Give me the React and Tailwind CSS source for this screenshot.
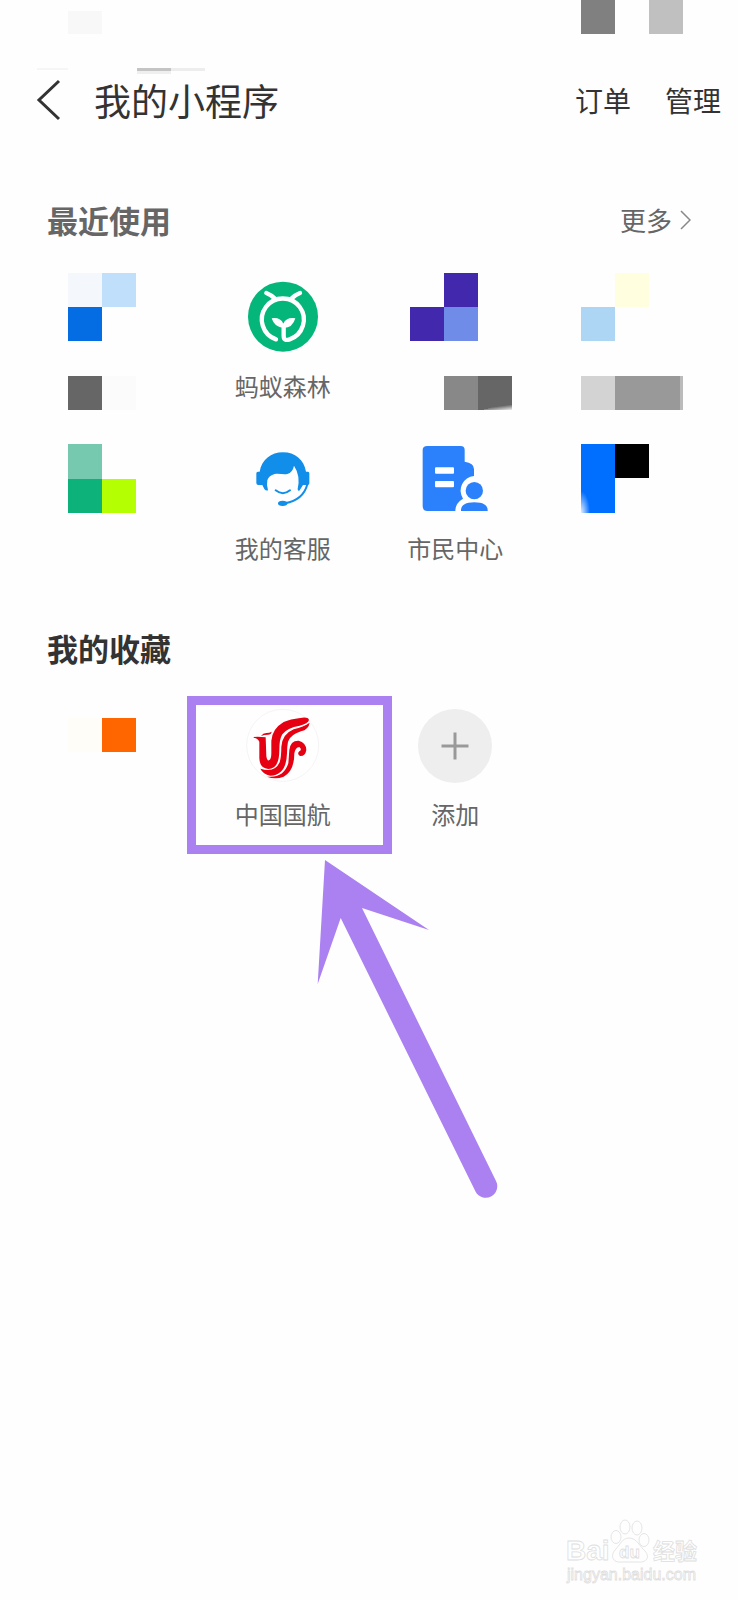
function Mosaic({ tiles, className, width = 102, height = 137, children }) {
  return (
    <svg width={width} height={height} viewBox={`0 0 ${width} ${height}`} className={className} shapeRendering="crispEdges" aria-hidden="true">
      {tiles.map(([x, y, w, h, fill]) => (
        <rect key={`${x}-${y}`} x={x} y={y} width={w} height={h} fill={fill} />
      ))}
      {children}
    </svg>
  );
}

function ForestIcon() {
  return (
    <svg viewBox="0 0 216 216" className="size-[72px]" aria-hidden="true">
      <circle cx="108" cy="107" r="105" fill="#04b67a" />
      <g fill="none" stroke="#fff" strokeWidth="13" strokeLinecap="round">
        <path d="M87 175A63 63 0 1 1 128 175C117 179 110 177 110 164V134" />
        <path d="M58 36Q74 42 86 55M159 36Q143 42 131 55" />
      </g>
      <path d="M74 112Q100 108 109 128Q118 108 145 112Q137 141 110 141Q82 139 74 112Z" fill="#fff" />
    </svg>
  );
}

function ServiceIcon() {
  return (
    <svg viewBox="0 0 216 216" className="size-[72px]" aria-hidden="true">
      <path
        d="M38 86C44 50 72 28 108 28S171 50 177 86H183Q187 87 187 91V121Q187 126 182 126H168L157 143Q152 145 152 138Q161 98 141 68Q137 88 121 93C108 96 97 90 83 93Q66 97 61 112Q58 128 63 142Q57 144 52 138L46 126H34Q28 126 28 120V91Q28 86 33 86Z"
        fill="#118dea"
      />
      <path d="M86 142Q108 159 129 142" fill="none" stroke="#118dea" strokeWidth="6" strokeLinecap="round" />
      <path d="M181 124Q169 171 114 181" fill="none" stroke="#118dea" strokeWidth="6" />
      <ellipse cx="107" cy="181" rx="14" ry="8" fill="#118dea" />
    </svg>
  );
}

function CitizenIcon() {
  return (
    <svg viewBox="0 0 216 216" className="size-[72px]" fill="#2b81fb" aria-hidden="true">
      <path d="M25 9H125Q137 9 137 21V56Q165 60 165 78V99A44 44 0 0 0 132 167Q109 180 109 204H25Q11 204 11 190V21Q11 9 25 9Z" />
      <circle cx="166" cy="143" r="26" />
      <path d="M126 204Q125 178 166 178T206 204Z" />
      <rect x="48" y="73" width="57" height="19" rx="3" fill="#fff" />
      <rect x="48" y="114" width="57" height="19" rx="3" fill="#fff" />
    </svg>
  );
}

function AirlineIcon() {
  return (
    <svg viewBox="0 0 216 216" className="size-[72px] overflow-visible" aria-hidden="true">
      <circle cx="107" cy="109" r="108" fill="#fff" stroke="#eee" strokeWidth="2" />
      <g transform="translate(-20 -27)" fill="#e50012">
        <path d="M40 111L52 110L76 112L78 168Q80 183 86 181Q93 178 93 160V122Q96 86 130 66Q150 57 180 54Q203 50 206 60Q203 71 178 77Q140 83 126 103Q117 117 117 150Q117 207 84 207Q58 205 57 175V125Q52 114 40 113Z" />
        <path d="M62 108Q68 99 78 99T94 95Q93 104 83 104Q72 104 62 108Z" />
        <path d="M60 206Q103 220 118 187Q123 170 123 140Q126 102 160 88Q190 80 208 68Q205 88 182 94Q150 104 143 125Q140 140 140 160Q138 226 90 227Q68 222 60 206Z" />
        <path d="M80 230Q130 235 144 190L147 150Q150 121 175 122Q197 127 198 150Q195 169 179 168Q169 161 177 154Q186 149 177 141Q165 142 162 160Q162 213 130 230Q105 240 80 230Z" />
      </g>
    </svg>
  );
}

function AddIcon() {
  return (
    <svg viewBox="0 0 72 72" className="size-[72px] overflow-visible" aria-hidden="true">
      <circle cx="36" cy="37" r="37" fill="#eee" />
      <path d="M36 23.500V50.500M22.500 37H49.500" stroke="#999" strokeWidth="3" />
    </svg>
  );
}

function MiniApp({ icon, label }) {
  return (
    <button type="button" className="flex w-full flex-col items-center gap-[18px] pt-2">
      {icon}
      <span className="text-2xl leading-[30px] text-[#666]">{label}</span>
    </button>
  );
}

function Highlight() {
  return (
    <>
      <div className="pointer-events-none absolute -top-[5px] -left-[10px] h-[158px] w-[205px] border-[9px] border-[#ab81f2]" />
      <svg width="184" height="340" viewBox="0 0 184 340" className="pointer-events-none absolute top-[159px] left-[119px]" aria-hidden="true">
        <path d="M9 0L113 70L46 48L180 321A11.500 11.500 0 0 1 159.500 331.500L24.700 58L1.700 124Z" fill="#ab81f2" />
      </svg>
    </>
  );
}

function Watermark() {
  return (
    <svg width="140" height="70" viewBox="0 0 140 70" role="img" aria-label="Baidu 经验" fill="#fefefe" stroke="#dedede" strokeWidth="0.800">
      <text x="1" y="44" fontSize="28" fontWeight="700" fontFamily="'Liberation Sans', sans-serif">Bai</text>
      <text x="88" y="43" fontSize="22" fontWeight="700" fontFamily="'Noto Sans CJK SC', sans-serif">经验</text>
      <ellipse cx="51" cy="21" rx="5" ry="6.500" />
      <ellipse cx="60" cy="11" rx="5" ry="7" />
      <ellipse cx="72" cy="12" rx="5" ry="7" />
      <ellipse cx="79" cy="24" rx="5" ry="6.500" />
      <path d="M64 22C72 22 75 31 80 35C86 42 80 47 73 46H56C48 47 45 40 50 34C55 29 57 22 64 22Z" />
      <text x="54" y="42" fontSize="17" fontWeight="700" fontFamily="'Liberation Sans', sans-serif">du</text>
      <text x="2" y="64" fontSize="16" fontFamily="'Liberation Sans', sans-serif">jingyan.baidu.com</text>
    </svg>
  );
}

export default function App() {
  return (
    <main className="flex min-h-screen flex-col bg-[#fefefe] font-['Noto_Sans_CJK_SC',sans-serif]">
      <div className="flex items-start justify-between pr-[55px] pl-[37px]">
        <Mosaic
          width={168}
          height={74}
          tiles={[
            [31, 11, 34, 23, "#f8f8f8"],
            [0, 68, 31, 2, "#f6f6f6"],
            [100, 68, 34, 3, "#c4c4c4"],
            [100, 71, 34, 3, "#efefef"],
            [134, 68, 34, 3, "#ededed"],
          ]}
        />
        <Mosaic width={102} height={34} tiles={[[0, 0, 34, 34, "#808080"], [68, 0, 34, 34, "#c0c0c0"]]} />
      </div>

      <header className="flex h-[52px] items-center pr-[17px] pl-9 text-[#333]">
        <button type="button" aria-label="返回">
          <svg width="26" height="42" viewBox="0 0 26 42" fill="none" stroke="currentColor" strokeWidth="3" aria-hidden="true">
            <path d="M23 2L3 21L23 40" />
          </svg>
        </button>
        <h1 className="ml-8 text-[37px] leading-[52px]">我的小程序</h1>
        <nav className="ml-auto flex gap-[34px] text-[28px] leading-10">
          <button type="button">订单</button>
          <button type="button">管理</button>
        </nav>
      </header>

      <section className="mt-[72px]">
        <div className="flex items-center justify-between px-[47px] leading-[44px] text-[#666]">
          <h2 className="text-[31px] font-bold">最近使用</h2>
          <a href="#more" className="flex items-center gap-2 text-[26px]">
            更多
            <svg width="11" height="20" viewBox="0 0 11 20" fill="none" stroke="#888" strokeWidth="1.500" aria-hidden="true">
              <path d="M1 1L10 10L1 19" />
            </svg>
          </a>
        </div>
        <div className="mt-[31px] grid auto-rows-[137px] grid-cols-4 gap-y-[25px] px-6">
          <Mosaic
            className="ml-11"
            tiles={[
              [0, 0, 34, 34, "#f4f8fc"],
              [34, 0, 34, 34, "#bfdffa"],
              [0, 34, 34, 34, "#046de3"],
              [0, 103, 34, 34, "#666"],
              [34, 103, 34, 34, "#fbfbfb"],
            ]}
          />
          <MiniApp icon={<ForestIcon />} label="蚂蚁森林" />
          <Mosaic
            className="ml-[41px]"
            tiles={[
              [34, 0, 34, 34, "#4128ad"],
              [0, 34, 34, 34, "#4128ad"],
              [34, 34, 34, 34, "#6f8de8"],
              [34, 103, 34, 34, "#888"],
              [68, 103, 34, 34, "#666"],
            ]}
          >
            <defs>
              <linearGradient id="corner" x1="0.600" y1="0.200" x2="1" y2="1">
                <stop offset="0.300" stopColor="#666" />
                <stop offset="1" stopColor="#eee" />
              </linearGradient>
            </defs>
            <path d="M72 137L102 129V137Z" fill="url(#corner)" />
          </Mosaic>
          <Mosaic
            className="ml-[39px]"
            tiles={[
              [34, 0, 34, 34, "#ffffe0"],
              [0, 34, 34, 34, "#acd6f4"],
              [0, 103, 34, 34, "#d3d3d3"],
              [34, 103, 65, 34, "#999"],
              [99, 103, 3, 34, "#bbb"],
            ]}
          />
          <Mosaic
            className="mt-[9px] ml-11"
            height={69}
            tiles={[
              [0, 0, 34, 35, "#76c9ae"],
              [0, 35, 34, 34, "#0db27a"],
              [34, 35, 34, 34, "#b4ff02"],
            ]}
          />
          <MiniApp icon={<ServiceIcon />} label="我的客服" />
          <MiniApp icon={<CitizenIcon />} label="市民中心" />
          <Mosaic
            className="mt-[9px] ml-[39px]"
            height={69}
            tiles={[
              [0, 0, 34, 69, "#006eff"],
              [34, 0, 34, 34, "#000"],
            ]}
          >
            <defs>
              <radialGradient id="fade" cx="0" cy="1" r="1">
                <stop offset="0" stopColor="#e6f0ff" />
                <stop offset="1" stopColor="#006eff" />
              </radialGradient>
            </defs>
            <rect x="0" y="47" width="9" height="22" fill="url(#fade)" />
          </Mosaic>
        </div>
      </section>

      <section className="mt-[54px]">
        <h2 className="px-[47px] text-[31px] leading-[44px] font-bold text-[#333]">我的收藏</h2>
        <div className="mt-[31px] grid grid-cols-4 px-6">
          <Mosaic
            className="mt-[17px] ml-11"
            height={34}
            tiles={[
              [0, 0, 34, 34, "#fffdf8"],
              [34, 0, 34, 34, "#ff6600"],
            ]}
          />
          <div className="relative">
            <MiniApp icon={<AirlineIcon />} label="中国国航" />
            <Highlight />
          </div>
          <MiniApp icon={<AddIcon />} label="添加" />
        </div>
      </section>

      <footer className="mt-auto flex justify-end pr-[33px] pb-[14px]">
        <Watermark />
      </footer>
    </main>
  );
}
